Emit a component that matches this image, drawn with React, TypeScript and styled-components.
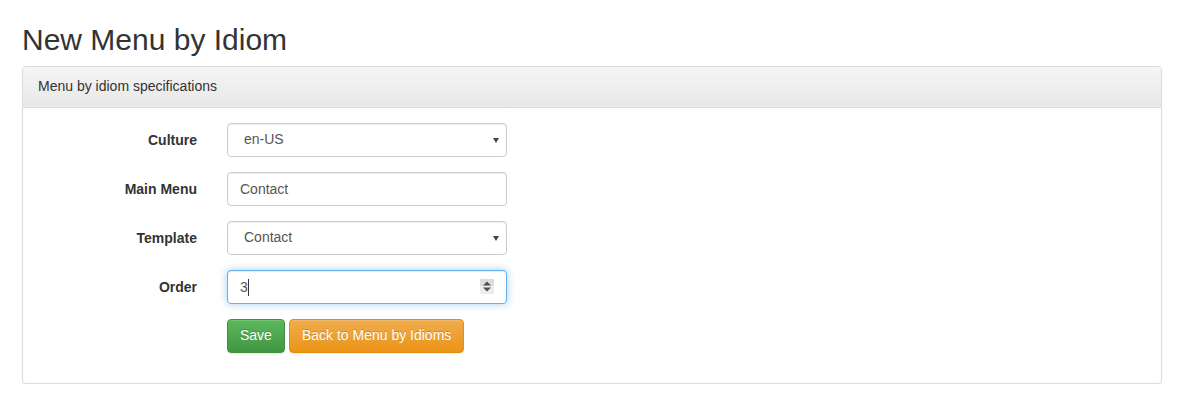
import React from 'react'
import styled, {createGlobalStyle} from 'styled-components'

const GlobalStyle = createGlobalStyle`
  body {
    margin: 0;
    background: #fff;
    font-family: "Liberation Sans", Arial, sans-serif;
    font-size: 14px;
    line-height: 1.42857;
    color: #333;
  }
`

const Page = styled.div`
  padding: 0 23px 0 22px;
`

const Title = styled.h2`
  margin: 23px 0 10px;
  font-size: 30px;
  font-weight: 400;
  line-height: 1.1;
  color: #333;
`

const Panel = styled.div`
  border: 1px solid #ddd;
  border-radius: 4px;
  box-shadow: 0 1px 2px rgba(0, 0, 0, 0.05);
  background: #fff;
`

const PanelHeading = styled.div`
  padding: 10px 15px;
  border-bottom: 1px solid #ddd;
  border-radius: 3px 3px 0 0;
  background: linear-gradient(to bottom, #f5f5f5 0%, #e8e8e8 100%);
  color: #333;
`

const PanelBody = styled.form`
  padding: 15px;
`

const FormGroup = styled.div`
  display: grid;
  grid-template-columns: 159px 280px;
  column-gap: 30px;
  margin-bottom: 15px;
`

const Label = styled.label`
  padding-top: 8px;
  text-align: right;
  font-weight: 700;
  color: #333;
`

const Field = styled.div`
  position: relative;
`

const Input = styled.input<{$focused?: boolean}>`
  display: block;
  box-sizing: border-box;
  width: 100%;
  height: 34px;
  padding: 6px 12px;
  font: inherit;
  color: #555;
  background: #fff;
  border: 1px solid ${p => (p.$focused ? '#66afe9' : '#ccc')};
  border-radius: 4px;
  outline: none;
  box-shadow: ${p =>
    p.$focused
      ? 'inset 0 1px 1px rgba(0,0,0,.075), 0 0 8px rgba(102,175,233,.6)'
      : 'inset 0 1px 1px rgba(0,0,0,.075)'};
`

const Select = styled.select`
  display: block;
  box-sizing: border-box;
  width: 100%;
  height: 34px;
  padding: 6px 12px 6px 16px;
  font: inherit;
  color: #555;
  background: #fff;
  border: 1px solid #ccc;
  border-radius: 4px;
  box-shadow: inset 0 1px 1px rgba(0, 0, 0, 0.075);
  appearance: none;
  outline: none;
`

const Arrow = styled.span`
  position: absolute;
  right: 8px;
  top: 15px;
  width: 0;
  height: 0;
  border-left: 3px solid transparent;
  border-right: 3px solid transparent;
  border-top: 5px solid #444;
  pointer-events: none;
`

const Spinner = styled.span`
  position: absolute;
  right: 13px;
  top: 9px;
  width: 14px;
  height: 15px;
  background: linear-gradient(to bottom, #ddd 0 50%, #ececec 50% 100%);
  pointer-events: none;
`

const Caret = styled.span`
  position: absolute;
  left: 21px;
  top: 9px;
  width: 1px;
  height: 17px;
  background: #333;
`

const Actions = styled.div`
  display: flex;
  gap: 4px;
  margin-left: 189px;
  margin-bottom: 15px;
`

const Button = styled.button<{$variant: 'success' | 'warning'}>`
  height: 34px;
  padding: 6px 12px;
  font: inherit;
  color: #fff;
  border-radius: 4px;
  cursor: pointer;
  text-shadow: 0 -1px 0 rgba(0, 0, 0, 0.2);
  box-shadow: inset 0 1px 0 rgba(255, 255, 255, 0.15), 0 1px 1px rgba(0, 0, 0, 0.075);
  border: 1px solid ${p => (p.$variant === 'success' ? '#3e8f3e' : '#e38d13')};
  background: ${p =>
    p.$variant === 'success'
      ? 'linear-gradient(to bottom, #5cb85c 0%, #419641 100%)'
      : 'linear-gradient(to bottom, #f0ad4e 0%, #eb9316 100%)'};
`

const App = () => {
    return (
      <Page>
          <GlobalStyle />
          <Title>New Menu by Idiom</Title>
          <Panel>
              <PanelHeading>Menu by idiom specifications</PanelHeading>
              <PanelBody onSubmit={e => e.preventDefault()}>
                  <FormGroup>
                      <Label htmlFor="culture">Culture</Label>
                      <Field>
                          <Select id="culture" defaultValue="en-US">
                              <option>en-US</option>
                          </Select>
                          <Arrow />
                      </Field>
                  </FormGroup>
                  <FormGroup>
                      <Label htmlFor="mainMenu">Main Menu</Label>
                      <Field>
                          <Input id="mainMenu" type="text" defaultValue="Contact" />
                      </Field>
                  </FormGroup>
                  <FormGroup>
                      <Label htmlFor="template">Template</Label>
                      <Field>
                          <Select id="template" defaultValue="Contact">
                              <option>Contact</option>
                          </Select>
                          <Arrow />
                      </Field>
                  </FormGroup>
                  <FormGroup>
                      <Label htmlFor="order">Order</Label>
                      <Field>
                          <Input id="order" type="text" defaultValue="3" $focused />
                          <Caret />
                          <Spinner>
                              <svg width="14" height="15" viewBox="0 0 14 15">
                                  <path d="M3 6.5 L7 2.5 L11 6.5 Z" fill="#505050" />
                                  <path d="M3 8.5 L11 8.5 L7 12.5 Z" fill="#505050" />
                              </svg>
                          </Spinner>
                      </Field>
                  </FormGroup>
                  <Actions>
                      <Button type="submit" $variant="success">Save</Button>
                      <Button type="button" $variant="warning">Back to Menu by Idioms</Button>
                  </Actions>
              </PanelBody>
          </Panel>
      </Page>
    )
}

export default App
